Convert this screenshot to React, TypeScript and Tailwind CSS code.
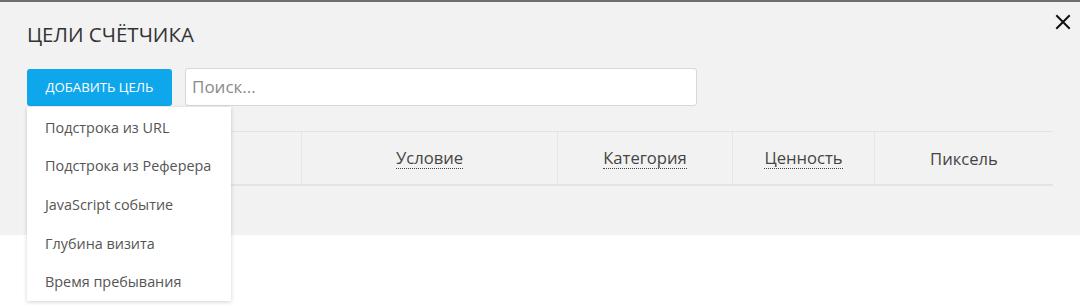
export default function App() {
  const items = [
    "Подстрока из URL",
    "Подстрока из Реферера",
    "JavaScript событие",
    "Глубина визита",
    "Время пребывания",
  ];

  const columns = [
    { label: "", width: "w-[275px]", dotted: false },
    { label: "Условие", width: "w-[256px]", dotted: true },
    { label: "Категория", width: "w-[175px]", dotted: true },
    { label: "Ценность", width: "w-[142px]", dotted: true },
    { label: "Пиксель", width: "flex-1", dotted: false },
  ];

  return (
    <div
      className="relative w-[1080px] h-[305px] overflow-hidden bg-white"
      style={{ fontFamily: '"Open Sans", "Liberation Sans", sans-serif' }}
    >
      {/* Panel */}
      <div className="border-t-2 border-[#6e6e6e] bg-[#f2f2f2] pt-[18px] pb-[49px] px-[27px]">
        <h1 className="text-[20.5px] leading-[28px] text-[#333] font-normal">ЦЕЛИ СЧЁТЧИКА</h1>

        <div className="mt-[20px] flex items-start gap-[13px]">
          <button
            type="button"
            className="mt-px h-[37px] w-[145px] rounded-[3px] bg-[#0fa7eb] text-[13.2px] text-white uppercase"
          >
            Добавить цель
          </button>
          <div className="h-[38px] w-[512px] rounded-[3px] border border-[#d8d8d8] bg-white flex items-center px-[6px]">
            <span className="text-[17px] text-[#8a8a8a]">Поиск...</span>
          </div>
        </div>

        {/* Table header */}
        <div className="mt-[25px] w-[1026px] h-[55px] flex border-t-[1.5px] border-b-2 border-[#e4e4e4]">
          {columns.map((c, i) => (
            <div
              key={i}
              className={`${c.width} flex items-center justify-center ${
                i < columns.length - 1 ? "border-r border-[#e6e6e6]" : ""
              }`}
            >
              {c.label && (
                <span
                  className={`text-[16.6px] leading-[21px] text-[#444] ${
                    c.dotted ? "border-b border-dotted border-[#444]" : ""
                  }`}
                >
                  {c.label}
                </span>
              )}
            </div>
          ))}
        </div>
      </div>

      {/* Close */}
      <button type="button" className="absolute top-[14px] right-[9px] w-[16px] h-[16px]" aria-label="Закрыть">
        <svg viewBox="0 0 16 16" width="16" height="16" fill="none" stroke="#111" strokeWidth="2" strokeLinecap="square">
          <path d="M2 2 L14 14 M14 2 L2 14" />
        </svg>
      </button>

      {/* Dropdown */}
      <div className="absolute left-[27px] top-[107px] w-[204px] bg-white shadow-[0_1px_4px_rgba(0,0,0,0.18)] pt-px">
        {items.map((item) => (
          <div key={item} className="h-[38.7px] flex items-center pl-[18px] text-[14.4px] text-[#555]">
            {item}
          </div>
        ))}
      </div>
    </div>
  );
}
